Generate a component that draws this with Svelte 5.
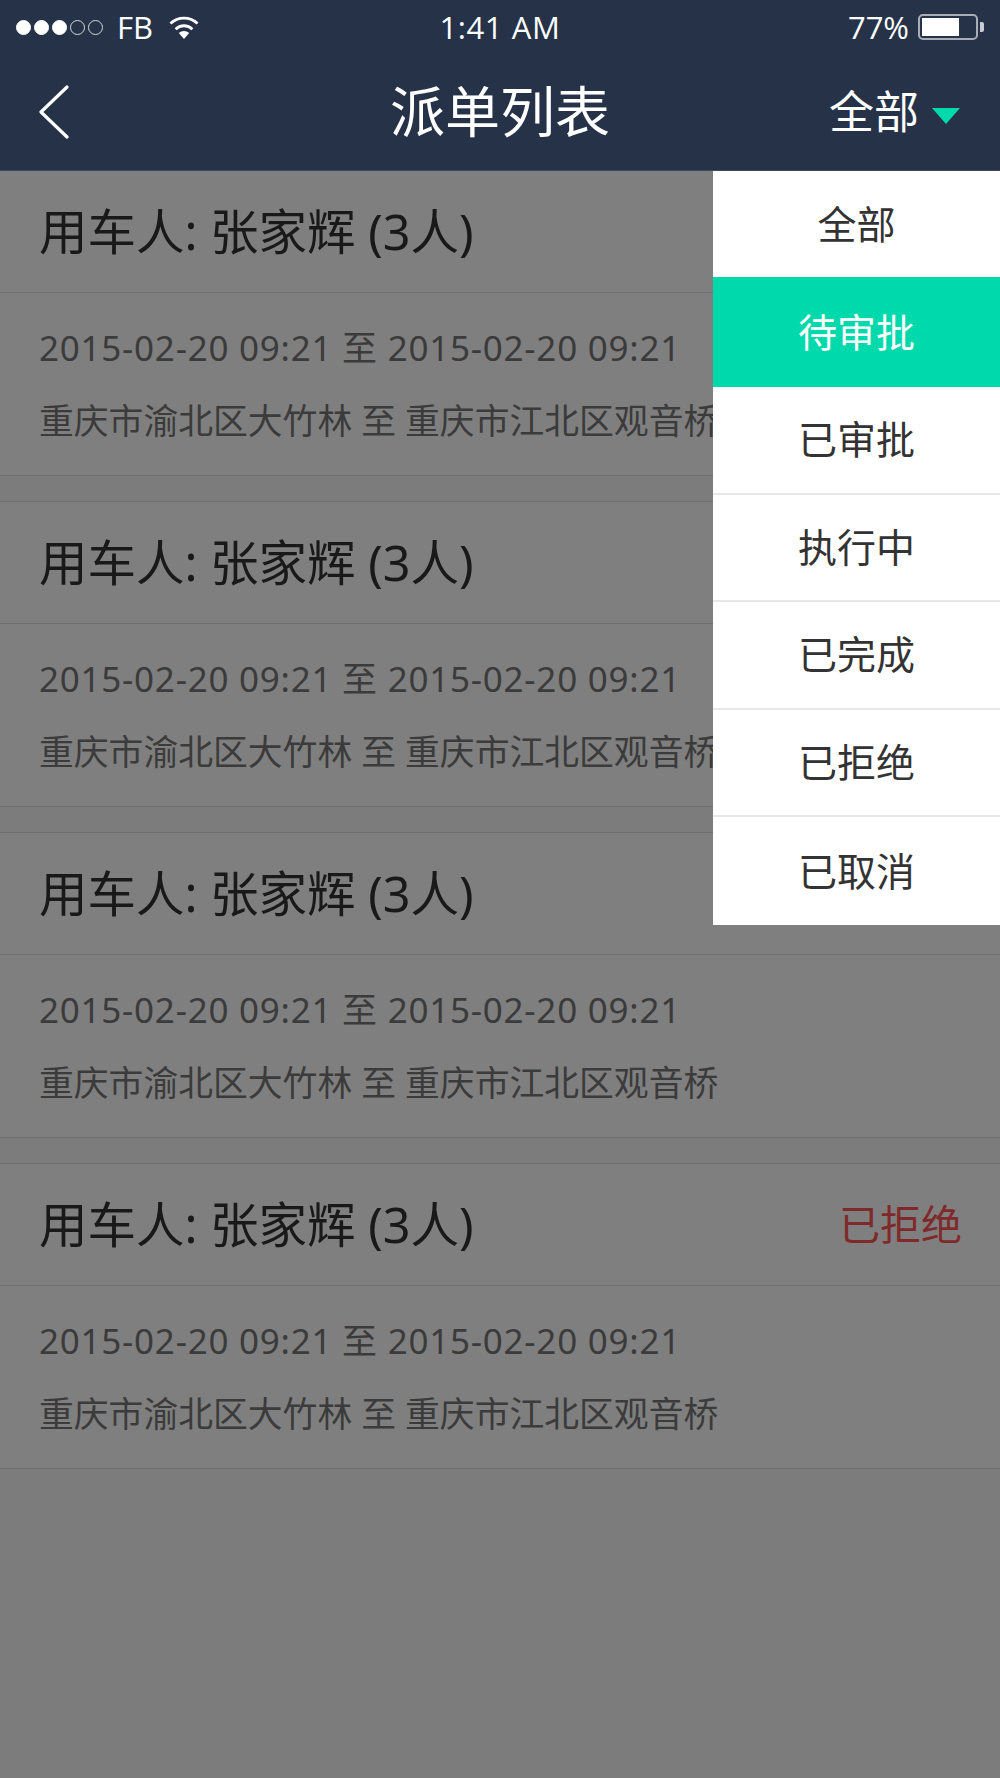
<script>
	// the first three rows' status labels sit behind the open menu
	const orders = [
		{ id: 1, status: '', rejected: false },
		{ id: 2, status: '', rejected: false },
		{ id: 3, status: '', rejected: false },
		{ id: 4, status: '已拒绝', rejected: true }
	];
	const filters = ['全部', '待审批', '已审批', '执行中', '已完成', '已拒绝', '已取消'];
	let active = '待审批';
</script>

<div class="screen">
	<header class="top">
		<div class="status-bar">
			<div class="carrier">
				<span class="dots">
					{#each [1, 1, 1, 0, 0] as on}
						<span class="signal" class:on={on === 1}></span>
					{/each}
				</span>
				<span class="fb">FB</span>
				<svg class="wifi" width="32" height="23" viewBox="0 0 32 23">
					<path d="M16 23 L10.8 17 A7.6 7.6 0 0 1 21.2 17 Z" fill="#fff" />
					<path d="M7.6 13.2 A12 12 0 0 1 24.4 13.2" fill="none" stroke="#fff" stroke-width="2.8" />
					<path d="M2.4 7.6 A19.5 19.5 0 0 1 29.6 7.6" fill="none" stroke="#fff" stroke-width="2.8" />
				</svg>
			</div>
			<div class="clock">1:41 AM</div>
			<div class="power">
				<span class="pct">77%</span>
				<span class="battery"><span class="level"></span></span>
				<span class="nub"></span>
			</div>
		</div>
		<nav class="nav">
			<svg class="back" width="30" height="54" viewBox="0 0 30 54">
				<path d="M28 2 L2 27 L28 52" fill="none" stroke="#fff" stroke-width="3.2" stroke-linecap="round" stroke-linejoin="round" />
			</svg>
			<h1>派单列表</h1>
			<div class="filter">
				<span>全部</span>
				<span class="caret"></span>
			</div>
		</nav>
	</header>

	<main>
		<div class="list">
			{#each orders as o (o.id)}
				<article class="card">
					<div class="card-head">
						<span class="who">用车人: 张家辉 (3人)</span>
						{#if o.status}<span class="state" class:rejected={o.rejected}>{o.status}</span>{/if}
					</div>
					<div class="card-body">
						<p class="time">2015-02-20 09:21 至 2015-02-20 09:21</p>
						<p class="route">重庆市渝北区大竹林 至 重庆市江北区观音桥</p>
					</div>
				</article>
			{/each}
		</div>
		<div class="mask"></div>
		<ul class="menu">
			{#each filters as f}
				<li class:active={f === active}>{f}</li>
			{/each}
		</ul>
	</main>
</div>

<style>
	:global(body) {
		margin: 0;
		background: #f0f0f0;
	}

	.screen {
		width: 1000px;
		height: 1778px;
		display: flex;
		flex-direction: column;
		overflow: hidden;
		font-family: 'Noto Sans', 'Noto Sans CJK SC', sans-serif;
		font-weight: 400;
	}

	.top {
		height: 170px;
		background: #253247;
		border-bottom: 1px solid #3d4a60;
		flex-shrink: 0;
		color: #fff;
	}

	.status-bar {
		height: 54px;
		margin-bottom: 2px;
		display: grid;
		grid-template-columns: 1fr auto 1fr;
		align-items: center;
		padding: 0 16px;
		font-family: 'Open Sans', sans-serif;
		font-size: 31px;
		font-weight: 400;
	}

	.carrier {
		display: flex;
		align-items: center;
	}

	.dots {
		display: flex;
		gap: 3px;
		margin-right: 14px;
	}

	.signal {
		width: 13px;
		height: 13px;
		border: 1.5px solid #d5d8dd;
		border-radius: 50%;
	}

	.signal.on {
		background: #fff;
		border-color: #fff;
	}

	.fb {
		margin-right: 15px;
	}

	.wifi {
		display: block;
	}

	.clock {
		text-align: center;
		letter-spacing: 0.6px;
	}

	.power {
		display: flex;
		align-items: center;
		justify-content: flex-end;
	}

	.pct {
		margin-right: 9px;
	}

	.battery {
		width: 60px;
		height: 26px;
		box-sizing: border-box;
		border: 2px solid #a8adb6;
		border-radius: 5px;
		padding: 2px;
		display: block;
	}

	.level {
		display: block;
		width: 37px;
		height: 100%;
		background: #fff;
	}

	.nub {
		width: 4px;
		height: 10px;
		margin-left: 2px;
		background: #c8ccd2;
		border-radius: 0 2px 2px 0;
	}

	.nav {
		height: 114px;
		display: flex;
		align-items: center;
		justify-content: center;
		position: relative;
	}

	.back {
		position: absolute;
		left: 39px;
		top: 29px;
	}

	h1 {
		margin: 0 0 6px;
		font-size: 55px;
		font-weight: 400;
		line-height: 1;
	}

	.filter {
		position: absolute;
		right: 40px;
		top: 34px;
		display: flex;
		align-items: center;
		gap: 13px;
		font-size: 45px;
		line-height: 44px;
	}

	.caret {
		width: 0;
		height: 0;
		border-left: 14px solid transparent;
		border-right: 14px solid transparent;
		border-top: 16px solid #00d9ab;
		margin-top: 8px;
	}

	main {
		position: relative;
		flex: 1;
		background: #f8f8f8;
	}

	.list {
		display: flex;
		flex-direction: column;
		gap: 25px;
	}

	.card {
		background: #fff;
		border-top: 1px solid #dedede;
		border-bottom: 1px solid #dedede;
	}

	.card:first-child {
		border-top: 0;
	}

	.card-head {
		height: 122px;
		box-sizing: border-box;
		display: flex;
		align-items: center;
		justify-content: space-between;
		padding: 0 38px 6px 39px;
		border-bottom: 1px solid #dedede;
	}

	.who {
		font-size: 48.5px;
		color: #333;
	}

	.state {
		font-size: 41px;
		color: #777;
	}

	.state.rejected {
		color: #f55;
	}

	.card-body {
		height: 182px;
		box-sizing: border-box;
		padding: 0 40px 0 39px;
		display: flex;
		flex-direction: column;
		justify-content: center;
		gap: 31px;
		color: #777;
		font-size: 35px;
		line-height: 42px;
	}

	.card-body p {
		margin: 0;
		white-space: nowrap;
	}

	.time {
		letter-spacing: 0.75px;
	}

	.route {
		font-size: 34.8px;
	}

	.mask {
		position: absolute;
		inset: 0;
		background: rgba(0, 0, 0, 0.5);
	}

	.menu {
		position: absolute;
		top: 0;
		right: 0;
		width: 287px;
		margin: 0;
		padding: 0;
		list-style: none;
		background: #fff;
		font-size: 39px;
		color: #333;
		text-align: center;
	}

	.menu li {
		height: 107.6px;
		box-sizing: border-box;
		display: flex;
		align-items: center;
		justify-content: center;
		padding-bottom: 5px;
		border-bottom: 2px solid #e8e8e8;
	}

	.menu li:first-child {
		height: 106px;
		border-bottom: 0;
	}

	.menu li:last-child {
		border-bottom: 0;
	}

	.menu li.active {
		height: 110px;
		background: #00d9ab;
		color: #fff;
		border-bottom: 0;
	}
</style>
